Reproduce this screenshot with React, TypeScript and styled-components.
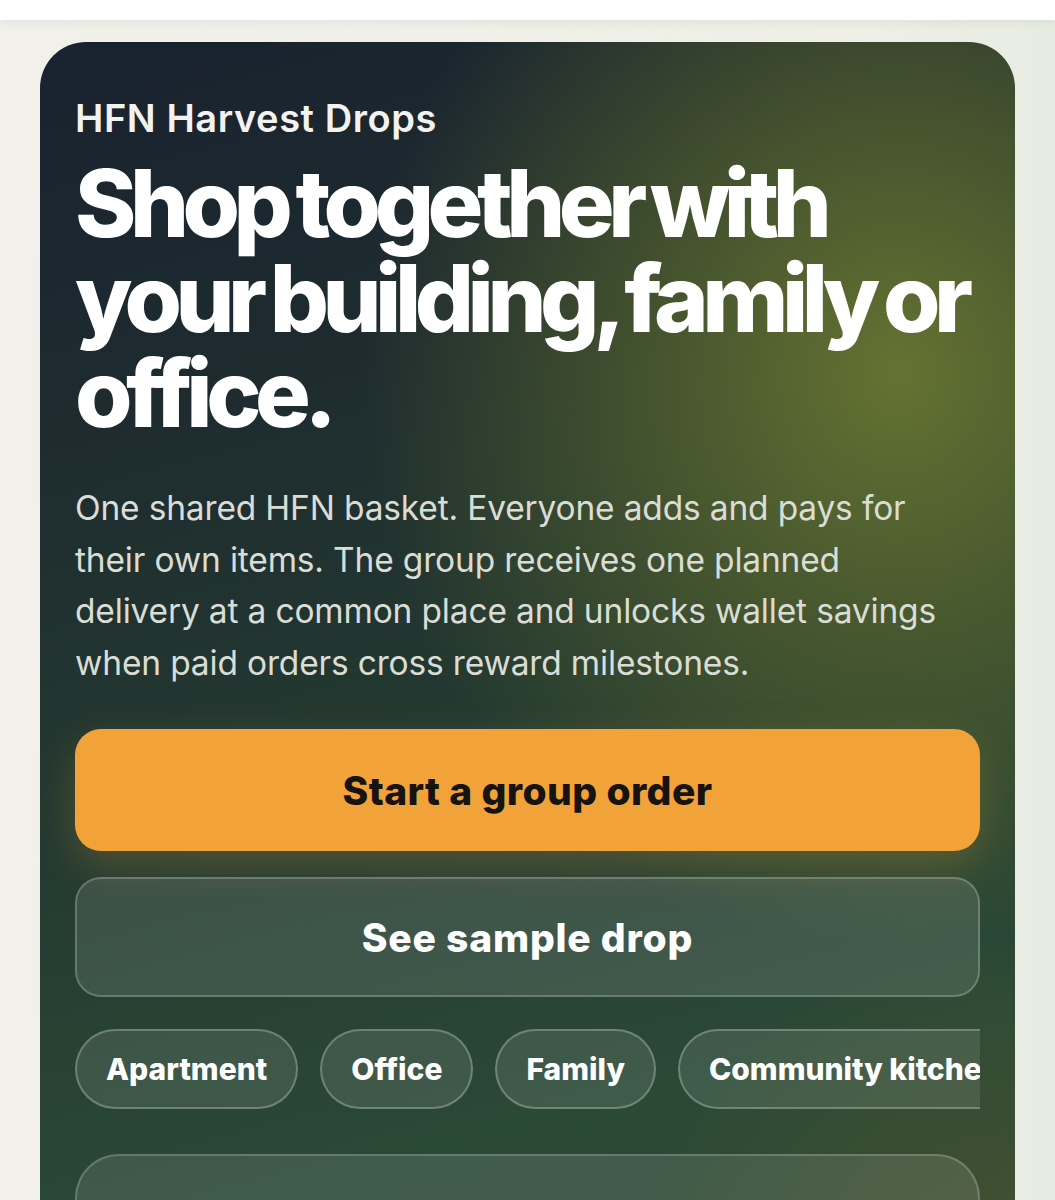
import styled, { createGlobalStyle } from "styled-components";

const GlobalStyle = createGlobalStyle`
  html, body {
    margin: 0;
    padding: 0;
    background: #efefe9;
    font-family: Inter, "Noto Sans", sans-serif;
  }
`;

const chips = ["Apartment", "Office", "Family", "Community kitchen"];

function App() {
  return (
    <>
      <GlobalStyle />
      <TopBar />
      <Page>
        <HeroCard>
          <Eyebrow>HFN Harvest Drops</Eyebrow>
          <Title>Shop together with your building, family or office.</Title>
          <Lead>
            One shared HFN basket. Everyone adds and pays for their own items.
            The group receives one planned delivery at a common place and
            unlocks wallet savings when paid orders cross reward milestones.
          </Lead>
          <Actions>
            <PrimaryButton>Start a group order</PrimaryButton>
            <GhostButton>See sample drop</GhostButton>
          </Actions>
          <ChipRow>
            {chips.map((c) => (
              <Chip key={c}>{c}</Chip>
            ))}
          </ChipRow>
          <InfoPanel />
        </HeroCard>
      </Page>
    </>
  );
}

const TopBar = styled.div`
  height: 20px;
  background: #ffffff;
  box-shadow: 0 3px 10px rgba(0, 0, 0, 0.06);
  position: relative;
  z-index: 1;
`;

const Page = styled.div`
  padding: 22px 40px 0 40px;
  height: 1180px;
  overflow: hidden;
  box-sizing: border-box;
  background: linear-gradient(90deg, #f1f0ea 0%, #efefe8 80%, #e7ece2 100%);
`;

const HeroCard = styled.section`
  border-radius: 46px;
  padding: 54px 35px 60px 35px;
  min-height: 1300px;
  box-sizing: border-box;
  color: #ffffff;
  background:
    radial-gradient(ellipse 55% 42% at 88% 24%, rgba(104, 118, 50, 0.95) 0%, rgba(90, 104, 46, 0.65) 45%, rgba(80, 95, 45, 0) 100%),
    radial-gradient(ellipse 40% 30% at 100% 95%, rgba(78, 84, 48, 0.9) 0%, rgba(78, 84, 48, 0) 100%),
    linear-gradient(165deg, #19222f 0%, #1e2c2f 25%, #243a31 50%, #2b4a36 75%, #2c4633 100%);
`;

const Eyebrow = styled.div`
  font-size: 38px;
  font-weight: 600;
  letter-spacing: 0.015em;
  line-height: 44px;
  color: #f2f3f0;
`;

const Title = styled.h1`
  margin: 16px 0 0 0;
  font-size: 93px;
  font-weight: 800;
  letter-spacing: -0.07em;
  word-spacing: -0.05em;
  line-height: 95px;
`;

const Lead = styled.p`
  margin: 42px 0 0 0;
  max-width: 890px;
  font-size: 33.5px;
  font-weight: 400;
  line-height: 51.5px;
  color: #d9ddd5;
  letter-spacing: -0.005em;
`;

const Actions = styled.div`
  display: flex;
  flex-direction: column;
  gap: 26px;
  margin-top: 40px;
`;

const BaseButton = styled.button`
  height: 122px;
  border-radius: 26px;
  font-family: Inter, "Noto Sans", sans-serif;
  font-size: 39px;
  font-weight: 800;
  letter-spacing: 0.01em;
  cursor: pointer;
  width: 100%;
`;

const PrimaryButton = styled(BaseButton)`
  background: #f1a239;
  color: #161310;
  border: none;
  box-shadow: 0 14px 40px rgba(241, 162, 57, 0.22);
`;

const GhostButton = styled(BaseButton)`
  height: 120px;
  background: rgba(255, 255, 255, 0.11);
  color: #ffffff;
  border: 2px solid rgba(255, 255, 255, 0.22);
  letter-spacing: 0.02em;
`;

const ChipRow = styled.div`
  display: flex;
  gap: 22px;
  margin-top: 32px;
  overflow: hidden;
`;

const Chip = styled.div`
  flex: none;
  height: 80px;
  padding: 0 29px;
  display: flex;
  align-items: center;
  border-radius: 40px;
  background: rgba(255, 255, 255, 0.1);
  border: 2px solid rgba(255, 255, 255, 0.25);
  box-sizing: border-box;
  font-size: 30px;
  font-weight: 800;
  letter-spacing: 0;
  white-space: nowrap;
`;

const InfoPanel = styled.div`
  margin-top: 45px;
  height: 200px;
  border-radius: 44px;
  background: rgba(255, 255, 255, 0.1);
  border: 2px solid rgba(255, 255, 255, 0.2);
`;

export default App;
